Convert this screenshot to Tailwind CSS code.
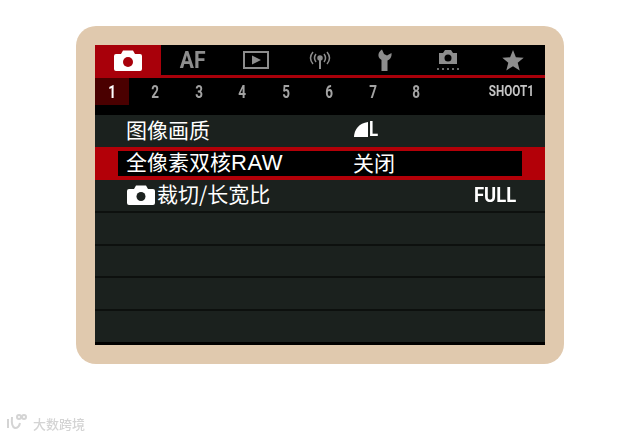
<!DOCTYPE html>
<html lang="en">
<head>
  <meta charset="UTF-8" />
  <title>Camera menu</title>
  <script src="https://cdn.jsdelivr.net/npm/@tailwindcss/browser@4"></script>
</head>
<body class="bg-white w-[640px] h-[437px] overflow-hidden font-['Noto_Sans_CJK_SC','Noto_Sans',sans-serif]">
  <div class="pt-[26px] pl-[76px]">
    <!-- Beige frame -->
    <div class="w-[488px] h-[338px] rounded-[20px] bg-[#e0c9ae] p-[19px]">
      <div class="w-[450px] h-[300px] bg-black flex flex-col">
        <!-- Tabs -->
        <div class="h-[33px] flex shrink-0 border-b-[3px] border-[#a8000a] text-[#8d8d8d]">
          <div class="w-[66px] bg-[#a8000a] flex items-center justify-center">
            <svg width="28" height="21" viewBox="0 0 28 21"><path fill="#fff" d="M2 4h5l2-3.500h10l2 3.500h5q2 0 2 2v13q0 2-2 2H2q-2 0-2-2V6q0-2 2-2z"/><circle cx="14" cy="12" r="5" fill="#a8000a"/></svg>
          </div>
          <div class="w-[63px] flex items-center justify-center font-bold font-['Roboto'] leading-none"><span class="inline-block text-[24px] scale-x-[0.88]">AF</span></div>
          <div class="w-[64px] flex items-center justify-center">
            <svg width="26" height="20" viewBox="0 0 26 20" fill="none"><rect x="1" y="2" width="24" height="16" stroke="#8d8d8d" stroke-width="2"/><path fill="#8d8d8d" d="M9 5.500l9 4.500-9 4.500z"/></svg>
          </div>
          <div class="w-[64px] flex items-center justify-center">
            <svg width="26" height="20" viewBox="0 0 26 20" fill="none" stroke="#8d8d8d" stroke-width="1.500"><path d="M9 4q-3 4 0 8M6 2q-5 6 0 12M17 4q3 4 0 8M20 2q5 6 0 12"/><circle cx="13" cy="8" r="2" fill="#8d8d8d"/><path d="M13 9v10" stroke-width="2"/></svg>
          </div>
          <div class="w-[64px] flex items-center justify-center">
            <svg width="16" height="22" viewBox="0 0 16 22"><path fill="#8d8d8d" d="M6 .500C2 3 1 8 5 10.500l.5.500V22h6V11.500C14 10.500 16 8 15.500 4L11 6.500 8 5z"/></svg>
          </div>
          <div class="w-[64px] flex items-center justify-center">
            <svg width="24" height="24" viewBox="0 0 24 24"><path fill="#8d8d8d" d="M3 5h4l2-3h6l2 3h4v11H3z"/><circle cx="12" cy="10" r="3.500" fill="#000"/><path stroke="#8d8d8d" stroke-width="1.500" stroke-dasharray="2 3" d="M1 21h22"/></svg>
          </div>
          <div class="w-[65px] flex items-center justify-center">
            <svg width="22" height="21" viewBox="0 0 22 21"><path fill="#8d8d8d" d="M11 0l2.900 7.300 7.800.5-6 5 2 7.600L11 16.200 4.300 20.400l2-7.600-6-5 7.800-.5z"/></svg>
          </div>
        </div>
        <!-- Sub tabs -->
        <div class="h-[27px] flex shrink-0 items-center text-[#a3a3a3] text-[18px] font-bold font-['Roboto'] leading-none">
          <div class="w-[34px] h-full bg-[#4a0000] text-white flex items-center justify-center"><span class="inline-block scale-x-75">1</span></div>
          <div class="w-[43.500px] text-center pl-[9px]"><span class="inline-block scale-x-75">2</span></div>
          <div class="w-[43.500px] text-center pl-[9px]"><span class="inline-block scale-x-75">3</span></div>
          <div class="w-[43.500px] text-center pl-[9px]"><span class="inline-block scale-x-75">4</span></div>
          <div class="w-[43.500px] text-center pl-[9px]"><span class="inline-block scale-x-75">5</span></div>
          <div class="w-[43.500px] text-center pl-[9px]"><span class="inline-block scale-x-75">6</span></div>
          <div class="w-[43.500px] text-center pl-[9px]"><span class="inline-block scale-x-75">7</span></div>
          <div class="w-[43.500px] text-center pl-[9px]"><span class="inline-block scale-x-75">8</span></div>
          <div class="ml-auto pr-[11px] text-[15px] text-[#c4c4c4]"><span class="inline-block origin-right scale-x-[0.78]">SHOOT1</span></div>
        </div>
        <div class="h-[10px] shrink-0"></div>
        <!-- Rows -->
        <div class="flex-1 bg-[#1b211e] flex flex-col text-white text-[21px] leading-none mb-[3px]">
          <div class="h-[32px] shrink-0 flex items-center pl-[31px] pb-[3px]">
            <span class="w-[228px]">图像画质</span>
            <span class="flex items-center">
              <svg width="14" height="15" viewBox="0 0 14 15"><path fill="#fff" d="M0 15C0 8 5 1 14 0v15z"/></svg>
              <span class="inline-block ml-[1px] font-bold font-['Roboto'] origin-left scale-x-[0.8]">L</span>
            </span>
          </div>
          <div class="h-[33px] shrink-0 bg-[#b30008] px-[23px] py-[4px]">
            <div class="h-full bg-black flex items-center pl-[8px] pb-[2px]">
              <span class="w-[227px]">全像素双核<span class="font-['Liberation_Sans'] text-[22px] tracking-[0.5px]">RAW</span></span>
              <span>关闭</span>
            </div>
          </div>
          <div class="h-[33px] shrink-0 flex items-center border-b-2 border-[#0d100e] pl-[32px] pr-[29px] pb-[1px]">
            <svg width="28" height="20" viewBox="0 0 28 20"><path fill="#fff" d="M2 4h5l2-3.500h10l2 3.500h5q2 0 2 2v12q0 2-2 2H2q-2 0-2-2V6q0-2 2-2z"/><circle cx="14" cy="11.500" r="4.500" fill="#1b211e"/></svg>
            <span class="ml-[2px] mb-[4px]">裁切/长宽比</span>
            <span class="ml-auto inline-block font-bold font-['Roboto'] origin-right scale-x-[0.875]">FULL</span>
          </div>
          <div class="h-[33px] shrink-0 border-b-2 border-[#0d100e]"></div>
          <div class="h-[32px] shrink-0 border-b-2 border-[#0d100e]"></div>
          <div class="h-[33px] shrink-0 border-b-2 border-[#0d100e]"></div>
        </div>
      </div>
    </div>
  </div>
  <!-- Watermark -->
  <div class="absolute left-[6px] top-[414px] flex items-center gap-[3px] text-[#d4d4d4] text-[13px] font-medium leading-none blur-[0.5px]">
    <svg width="24" height="18" viewBox="0 0 24 18" fill="none" stroke="#d4d4d4" stroke-width="2"><path d="M2 5v9M6 3q-1 10 3 11 4 0 5-5"/><circle cx="13" cy="3" r="2"/><circle cx="18" cy="3" r="2"/></svg>
    <span>大数跨境</span>
  </div>
</body>
</html>
